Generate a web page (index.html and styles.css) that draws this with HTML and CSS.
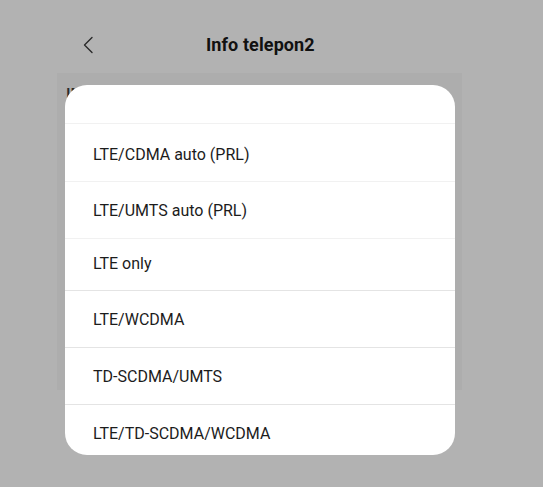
FILE: index.html
```html
<!DOCTYPE html>
<html lang="id">
<head>
<meta charset="utf-8">
<title>Info telepon2</title>
<link rel="stylesheet" href="styles.css">
</head>
<body>
<div class="screen">
  <header class="topbar">
    <svg class="back" width="12" height="18" viewBox="0 0 12 18" aria-hidden="true">
      <polyline points="10,1.5 2.5,9 10,16.5" fill="none" stroke="#2a2a2a" stroke-width="1.4" stroke-linecap="round" stroke-linejoin="round"/>
    </svg>
    <h1 class="title">Info telepon2</h1>
  </header>
  <section class="card">
    <div class="card-label">IMEI</div>
  </section>

  <div class="dialog">
    <div class="dialog-spacer"></div>
    <div class="row row--faint row--tall row--low"><span>LTE/CDMA auto (PRL)</span></div>
    <div class="row row--faint"><span>LTE/UMTS auto (PRL)</span></div>
    <div class="row row--faint row--short"><span>LTE only</span></div>
    <div class="row"><span>LTE/WCDMA</span></div>
    <div class="row"><span>TD-SCDMA/UMTS</span></div>
    <div class="row row--tall"><span>LTE/TD-SCDMA/WCDMA</span></div>
  </div>
</div>
</body>
</html>
```

FILE: styles.css
```css
* { box-sizing: border-box; }
html, body {
  margin: 0;
  padding: 0;
  background: #b2b2b2;
  font-family: Roboto, "Noto Sans", "Liberation Sans", sans-serif;
}
.screen {
  position: relative;
  width: 543px;
  height: 487px;
  overflow: hidden;
}
.topbar {
  height: 73px;
  display: flex;
  align-items: center;
  padding: 16px 0 0 82px;
}
.back {
  display: block;
  flex: none;
}
.title {
  margin: 0 0 0 112px;
  font-size: 18px;
  font-weight: 700;
  color: #111;
  letter-spacing: 0.1px;
}
.card {
  margin-left: 57px;
  width: 405px;
  height: 317px;
  background: #adadad;
  padding: 12px 0 0 9px;
}
.card-label {
  font-size: 16px;
  font-weight: 500;
  color: #2a2a2a;
}
.dialog {
  position: absolute;
  left: 65px;
  top: 85px;
  width: 390px;
  height: 370px;
  background: #fff;
  border-radius: 22px;
  overflow: hidden;
}
.dialog-spacer {
  height: 38px;
}
.row {
  height: 57px;
  display: flex;
  align-items: center;
  padding: 0 28px;
  border-top: 1px solid #e4e4e4;
  font-size: 16px;
  color: #1c1c1c;
}
.row--tall { height: 58px; }
.row--low { padding-top: 3px; }
.row--faint { border-top-color: #f1f1f1; }
.row--short { height: 52px; padding-bottom: 3px; }
```
